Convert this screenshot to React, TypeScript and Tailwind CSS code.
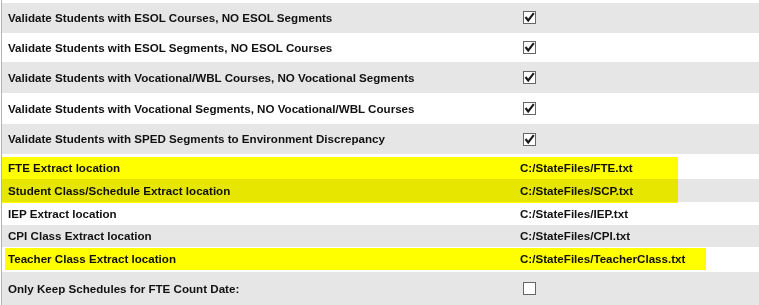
const checks = [
  { label: "Validate Students with ESOL Courses, NO ESOL Segments", h: "h-[30px]", gray: true },
  { label: "Validate Students with ESOL Segments, NO ESOL Courses", h: "h-[30px]", gray: false },
  { label: "Validate Students with Vocational/WBL Courses, NO Vocational Segments", h: "h-[31px]", gray: true },
  { label: "Validate Students with Vocational Segments, NO Vocational/WBL Courses", h: "h-[31px]", gray: false },
  { label: "Validate Students with SPED Segments to Environment Discrepancy", h: "h-[31px]", gray: true },
];

const files = [
  { label: "FTE Extract location", value: "C:/StateFiles/FTE.txt", h: "h-[24px]", gray: false },
  { label: "Student Class/Schedule Extract location", value: "C:/StateFiles/SCP.txt", h: "h-[23px]", gray: true },
  { label: "IEP Extract location", value: "C:/StateFiles/IEP.txt", h: "h-[23px]", gray: false },
  { label: "CPI Class Extract location", value: "C:/StateFiles/CPI.txt", h: "h-[22px]", gray: true },
  { label: "Teacher Class Extract location", value: "C:/StateFiles/TeacherClass.txt", h: "h-[24px]", gray: false },
];

function Box({ checked }: { checked: boolean }) {
  return (
    <span className="flex h-[13px] w-[13px] items-center justify-center border border-[#666] bg-white">
      {checked && (
        <svg width="11" height="11" viewBox="0 0 11 11">
          <path d="M1.5 5 L4.2 8.5 L9.8 1.2" fill="none" stroke="#1a1a1a" strokeWidth="2.1" />
        </svg>
      )}
    </span>
  );
}

export default function App() {
  return (
    <div
      className="relative h-[305px] w-[759px] overflow-hidden bg-white pl-px text-[11.6px] font-bold text-[#111]"
      style={{ fontFamily: '"Liberation Sans", Arial, sans-serif' }}
    >
      <div className="flex h-full flex-col border-l border-[#b4b4b4] pt-[3px]">
        {checks.map((c) => (
          <div key={c.label} className={`grid grid-cols-[521px_1fr] items-center ${c.h} ${c.gray ? "bg-[#e6e6e6]" : "bg-white"}`}>
            <span className="pl-[6px]">{c.label}</span>
            <Box checked />
          </div>
        ))}
        <div className="h-px bg-white" />
        {files.map((f) => (
          <div key={f.label} className={`grid grid-cols-[518px_1fr] items-center ${f.h} ${f.gray ? "bg-[#e6e6e6]" : "bg-white"}`}>
            <span className="pl-[6px]">{f.label}</span>
            <span>{f.value}</span>
          </div>
        ))}
        <div className="h-[2px] bg-white" />
        <div className="grid h-[33px] grid-cols-[521px_1fr] items-center bg-[#e6e6e6]">
          <span className="pl-[6px]">Only Keep Schedules for FTE Count Date:</span>
          <Box checked={false} />
        </div>
      </div>

      {/* highlighter marks */}
      <div className="pointer-events-none absolute left-[2px] top-[157px] h-[46px] w-[676px] bg-[#ffff00] mix-blend-multiply" />
      <div className="pointer-events-none absolute left-[5px] top-[248px] h-[22px] w-[701px] bg-[#ffff00] mix-blend-multiply" />
    </div>
  );
}
